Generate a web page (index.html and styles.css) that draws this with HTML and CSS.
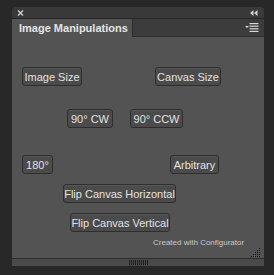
FILE: index.html
```html
<!DOCTYPE html>
<html lang="en">
<head>
    <meta charset="UTF-8">
    <meta name="viewport" content="width=device-width, initial-scale=1.0">
    <title>Image Manipulations</title>
    <link rel="stylesheet" href="styles.css">
</head>
<body>
    <div class="panel">
        <div class="titlebar">
            <svg class="close" width="7" height="6" viewBox="0 0 7 6">
                <path d="M1 0.5 L6 5.5 M6 0.5 L1 5.5" stroke="#d0d0d0" stroke-width="1.4"/>
            </svg>
            <svg class="collapse" width="8" height="6" viewBox="0 0 8 6">
                <path d="M0 3 L3.5 0 L3.5 6 Z M4 3 L7.5 0 L7.5 6 Z" fill="#d0d0d0"/>
            </svg>
        </div>
        <div class="tabs">
            <div class="tab">Image Manipulations</div>
            <div class="tab-rest">
                <svg class="menu" width="14" height="9" viewBox="0 0 14 9">
                    <path d="M0 3 L4 3 L2 5 Z" fill="#d8d8d8"/>
                    <rect x="4.5" y="0" width="9" height="1.2" fill="#d8d8d8"/>
                    <rect x="4.5" y="2.6" width="9" height="1.2" fill="#d8d8d8"/>
                    <rect x="4.5" y="5.2" width="9" height="1.2" fill="#d8d8d8"/>
                    <rect x="4.5" y="7.8" width="9" height="1.2" fill="#d8d8d8"/>
                </svg>
            </div>
        </div>
        <div class="content">
            <div class="row row-1">
                <button class="btn w-image">Image Size</button>
                <button class="btn w-canvas">Canvas Size</button>
            </div>
            <div class="row row-2">
                <button class="btn w-cw">90° CW</button>
                <button class="btn w-ccw">90° CCW</button>
            </div>
            <div class="row row-3">
                <button class="btn w-180">180°</button>
                <button class="btn w-arb">Arbitrary</button>
            </div>
            <div class="row row-4">
                <button class="btn w-fliph">Flip Canvas Horizontal</button>
            </div>
            <div class="row row-5">
                <button class="btn w-flipv">Flip Canvas Vertical</button>
            </div>
            <div class="credit">Created with Configurator</div>
            <svg class="grip" width="10" height="9" viewBox="0 0 10 9">
                <g fill="#1e1e1e">
                    <rect x="8" y="0" width="1" height="1"/>
                    <rect x="6" y="2" width="1" height="1"/><rect x="8" y="2" width="1" height="1"/>
                    <rect x="4" y="4" width="1" height="1"/><rect x="6" y="4" width="1" height="1"/><rect x="8" y="4" width="1" height="1"/>
                    <rect x="2" y="6" width="1" height="1"/><rect x="4" y="6" width="1" height="1"/><rect x="6" y="6" width="1" height="1"/><rect x="8" y="6" width="1" height="1"/>
                    <rect x="0" y="8" width="1" height="1"/><rect x="2" y="8" width="1" height="1"/><rect x="4" y="8" width="1" height="1"/><rect x="6" y="8" width="1" height="1"/><rect x="8" y="8" width="1" height="1"/>
                </g>
            </svg>
        </div>
        <div class="bottombar">
            <div class="handle"></div>
        </div>
    </div>
</body>
</html>
```

FILE: styles.css
```css
body {
    margin: 0;
    background-color: #282828;
    font-family: "Liberation Sans", Arial, sans-serif;
}
.panel {
    margin: 7px 0 0 12px;
    width: 252px;
    display: flex;
    flex-direction: column;
}
.titlebar {
    height: 11px;
    background-color: #393939;
    border-radius: 4px 4px 0 0;
    display: flex;
    align-items: center;
    justify-content: space-between;
    padding: 0 6px 0 5px;
}
.tabs {
    height: 18px;
    display: flex;
    border-top: 1px solid #262626;
}
.tab {
    width: 121px;
    background-color: #535353;
    color: #e4e4e4;
    font-size: 11px;
    font-weight: bold;
    line-height: 18px;
    white-space: nowrap;
    padding-left: 7px;
    box-sizing: border-box;
    border-right: 1px solid #2c2c2c;
}
.tab-rest {
    flex: 1;
    background-color: #3c3c3c;
    border-bottom: 1px solid #2c2c2c;
    display: flex;
    align-items: center;
    justify-content: flex-end;
    padding-right: 5px;
}
.content {
    position: relative;
    height: 221px;
    background-color: #535353;
    box-sizing: border-box;
    padding-top: 30px;
}
.row {
    display: flex;
}
.row-1 { padding-left: 10px; gap: 73px; }
.row-2 { padding-left: 55px; gap: 17px; margin-top: 23px; }
.row-3 { padding-left: 10px; gap: 117px; margin-top: 27px; }
.row-4 { padding-left: 51px; margin-top: 10px; }
.row-5 { padding-left: 58px; margin-top: 10px; }
.btn {
    height: 19px;
    padding: 0;
    background-color: #4b4b4b;
    border: 1px solid #2e2e2e;
    border-radius: 3px;
    box-shadow: inset 0 1px 0 rgba(255, 255, 255, 0.07);
    color: #e2e2e2;
    font-family: "Liberation Sans", Arial, sans-serif;
    font-size: 11px;
    text-align: center;
}
.w-image { width: 60px; }
.w-canvas { width: 66px; }
.w-cw { width: 46px; }
.w-ccw { width: 53px; }
.w-180 { width: 31px; }
.w-arb { width: 49px; }
.w-fliph { width: 113px; }
.w-flipv { width: 100px; }
.credit {
    margin: 6px 0 0 141px;
    font-size: 8px;
    color: #c8c8c8;
}
.grip {
    position: absolute;
    right: 3px;
    bottom: 1px;
}
.bottombar {
    height: 7px;
    background-color: #4a4a4a;
    border-top: 1px solid #2e2e2e;
    display: flex;
    justify-content: center;
    align-items: center;
}
.handle {
    width: 19px;
    height: 5px;
    background-image: repeating-linear-gradient(90deg, #1e1e1e 0 1px, transparent 1px 2px);
}
```
